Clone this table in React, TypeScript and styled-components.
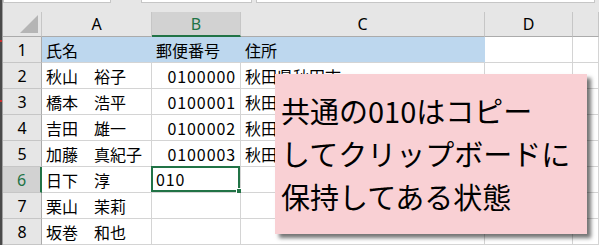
import styled, { createGlobalStyle, css } from 'styled-components'

const GlobalStyle = createGlobalStyle`
  html, body {
    margin: 0;
    padding: 0;
    background: #ffffff;
  }
  body {
    width: 599px;
    height: 245px;
    overflow: hidden;
    font-family: "Noto Sans CJK JP", "Noto Sans", sans-serif;
  }
`

const columns = [
  { key: 'A', width: 110 },
  { key: 'B', width: 89 },
  { key: 'C', width: 244 },
  { key: 'D', width: 88 },
]

const rows = [
  { name: '氏名', zip: '郵便番号', addr: '住所', head: true },
  { name: '秋山　裕子', zip: '0100000', addr: '秋田県秋田市' },
  { name: '橋本　浩平', zip: '0100001', addr: '秋田県秋田市' },
  { name: '吉田　雄一', zip: '0100002', addr: '秋田県秋田市' },
  { name: '加藤　真紀子', zip: '0100003', addr: '秋田県秋田市' },
  { name: '日下　淳', zip: '010', addr: '', active: true },
  { name: '栗山　茉莉', zip: '', addr: '' },
  { name: '坂巻　和也', zip: '', addr: '' },
]

const GREEN = '#217346'

export default function App() {
  return (
    <>
      <GlobalStyle />
      <Page>
        <WindowEdge />
        <Workbook>
          <FormulaStrip>
            <NameBox />
            <StripGap />
            <FormulaBox $w={109} />
            <FormulaBox $w={0} $grow />
          </FormulaStrip>
          <Sheet>
            <Corner>
              <svg width="18" height="18" viewBox="0 0 18 18">
                <polygon points="18,0 18,18 0,18" fill="#b5b5b5" />
              </svg>
            </Corner>
            {columns.map((c) => (
              <ColHead key={c.key} $active={c.key === 'B'}>
                {c.key}
              </ColHead>
            ))}
            <ColHead />

            {rows.map((r, i) => (
              <Row key={i} r={r} n={i + 1} />
            ))}
          </Sheet>
          <Callout>
            共通の010はコピー
            <br />
            してクリップボードに
            <br />
            保持してある状態
          </Callout>
        </Workbook>
      </Page>
    </>
  )
}

function Row({ r, n }: { r: (typeof rows)[number]; n: number }) {
  return (
    <>
      <RowHead $active={!!r.active}>{n}</RowHead>
      <Cell $blue={!!r.head}>{r.name}</Cell>
      {r.active ? (
        <Cell $selected>
          <Num>{r.zip}</Num>
          <FillHandle />
        </Cell>
      ) : (
        <Cell $blue={!!r.head} $right={!r.head}>
          {r.head ? r.zip : <Num>{r.zip}</Num>}
        </Cell>
      )}
      <Cell $blue={!!r.head}>{r.addr}</Cell>
      <Cell />
      <Cell />
    </>
  )
}

const Page = styled.div`
  display: flex;
  width: 599px;
  height: 245px;
  overflow: hidden;
  background: #e6e6e6;
`

const WindowEdge = styled.div`
  width: 2px;
  flex: none;
  border-right: 1px solid #a0a0a0;
  background: linear-gradient(
    to bottom,
    #4a4a4a 0 40px,
    #c83030 40px 42px,
    #4a4a4a 42px 100px,
    #c83030 100px 102px,
    #4a4a4a 102px
  );
`

const Workbook = styled.div`
  position: relative;
  flex: 1;
  display: flex;
  flex-direction: column;
  min-width: 0;
`

const FormulaStrip = styled.div`
  height: 13px;
  display: flex;
  align-items: flex-start;
  background: #e6e6e6;
`

const NameBox = styled.div`
  width: 106px;
  height: 2px;
  background: #ffffff;
  border: 1px solid #c6c6c6;
  border-top: none;
`

const StripGap = styled.div`
  width: 30px;
`

const FormulaBox = styled.div<{ $w: number; $grow?: boolean }>`
  width: ${(p) => p.$w}px;
  height: 2px;
  margin-right: 4px;
  background: #ffffff;
  border: 1px solid #c6c6c6;
  border-top: none;
  ${(p) => p.$grow && 'flex: 1;'}
`

const Sheet = styled.div`
  display: grid;
  grid-template-columns: 39px 110px 89px 244px 88px 1fr;
  grid-template-rows: 25px;
  grid-auto-rows: 26px;
  font-size: 16px;
  color: #000000;
`

const Corner = styled.div`
  display: flex;
  align-items: flex-end;
  justify-content: flex-end;
  padding: 0 3px 3px 0;
  background: #e6e6e6;
  border-right: 1px solid #c6c6c6;
  border-bottom: 1px solid #ababab;
`

const ColHead = styled.div<{ $active?: boolean }>`
  display: flex;
  align-items: center;
  justify-content: center;
  font-family: "Noto Sans", sans-serif;
  font-size: 16px;
  background: #e6e6e6;
  border-right: 1px solid #c6c6c6;
  border-bottom: 1px solid #ababab;
  ${(p) =>
    p.$active &&
    css`
      background: #d2d2d2;
      color: ${GREEN};
      border-bottom: 2px solid ${GREEN};
    `}
`

const RowHead = styled.div<{ $active: boolean }>`
  display: flex;
  align-items: center;
  justify-content: center;
  font-family: "Noto Sans", sans-serif;
  font-size: 16px;
  background: #e6e6e6;
  border-right: 1px solid #ababab;
  border-bottom: 1px solid #c6c6c6;
  ${(p) =>
    p.$active &&
    css`
      background: #d2d2d2;
      color: ${GREEN};
      border-right: 2px solid ${GREEN};
    `}
`

const Cell = styled.div<{ $blue?: boolean; $right?: boolean; $selected?: boolean }>`
  position: relative;
  display: flex;
  align-items: center;
  justify-content: ${(p) => (p.$right ? 'flex-end' : 'flex-start')};
  padding: 0 4px;
  white-space: pre;
  overflow: visible;
  background: ${(p) => (p.$blue ? '#bdd7ee' : '#ffffff')};
  border-right: 1px solid ${(p) => (p.$blue ? '#bdd7ee' : '#d4d4d4')};
  border-bottom: 1px solid #d4d4d4;
  ${(p) =>
    p.$selected &&
    css`
      box-shadow: inset 0 0 0 2px ${GREEN};
      margin: -1px 0 0 -1px;
      padding-left: 5px;
    `}
`

const Num = styled.span`
  letter-spacing: 0.9px;
`

const FillHandle = styled.span`
  position: absolute;
  right: -3px;
  bottom: -3px;
  width: 5px;
  height: 5px;
  background: ${GREEN};
  border: 1px solid #ffffff;
`

const Callout = styled.div`
  position: absolute;
  left: 272px;
  top: 74px;
  width: 312px;
  height: 160px;
  box-sizing: border-box;
  padding: 15px 0 0 6px;
  background: #f9d0d4;
  box-shadow: 4px 4px 4px rgba(0, 0, 0, 0.55);
  font-family: "Noto Sans CJK JP", sans-serif;
  font-size: 29px;
  font-weight: 400;
  line-height: 43px;
  color: #000000;
  white-space: nowrap;
`
